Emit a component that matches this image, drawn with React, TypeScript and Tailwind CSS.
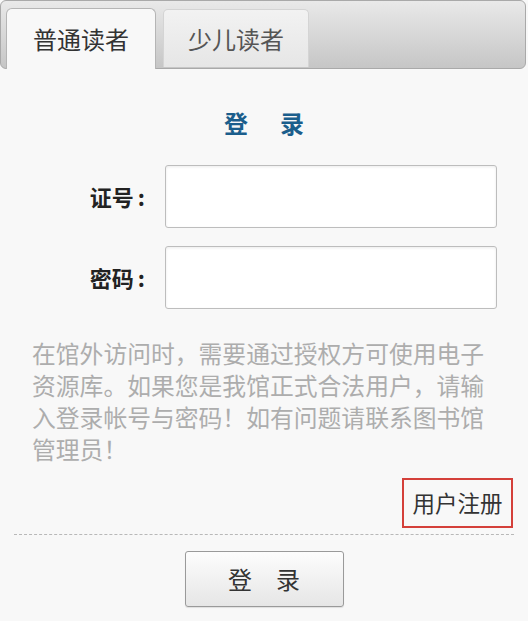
import React from "react";

const CJK = { fontFamily: '"Noto Sans CJK SC", "Noto Sans", sans-serif' };

function Field({ label }: { label: string }) {
  return (
    <div className="flex items-center">
      <div className="flex w-[145px] items-center justify-end text-[22px] font-bold text-[#222]">
        <span>{label}</span>
        <span className="ml-[4px]">:</span>
      </div>
      <input
        type="text"
        className="ml-[20px] h-[63px] w-[332px] rounded-[3px] border-[1.5px] border-[#bdbdbd] bg-white shadow-[inset_0_1px_3px_rgba(0,0,0,0.08)] outline-none"
      />
    </div>
  );
}

export default function App() {
  return (
    <div className="h-[621px] w-[528px] overflow-hidden bg-[#f8f8f8]" style={CJK}>
      {/* tab strip */}
      <div className="flex h-[69px] w-[526px] items-end gap-[7px] rounded-[6px] border border-[#a9a9a9] bg-gradient-to-b from-[#e9e9e9] to-[#c6c6c6] pl-[5px]">
        <div className="-mb-px flex h-[61px] w-[150px] items-center justify-center rounded-t-[6px] border border-b-0 border-[#b5b5b5] bg-[#f8f8f8] text-[24px] text-[#333]">
          普通读者
        </div>
        <div className="mb-px flex h-[58px] w-[146px] items-center justify-center rounded-t-[5px] border border-b-0 border-[#d4d4d4] bg-gradient-to-b from-[#f2f2f2] to-[#e6e6e6] text-[24px] text-[#555]">
          少儿读者
        </div>
      </div>

      <div className="mt-[42px] flex justify-center gap-[32px] text-[24px] font-bold leading-[24px] text-[#1b5e8c]">
        <span>登</span>
        <span>录</span>
      </div>

      <div className="mt-[30px] flex flex-col gap-[18px]">
        <Field label="证号" />
        <Field label="密码" />
      </div>

      <p className="ml-[32px] mt-[28px] w-[468px] text-[23.8px] leading-[32px] text-[#adadad]">
        在馆外访问时，需要通过授权方可使用电子资源库。如果您是我馆正式合法用户，请输入登录帐号与密码！如有问题请联系图书馆管理员！
      </p>

      <div className="mr-[15px] mt-[13px] flex justify-end">
        <a className="flex h-[50px] w-[111px] items-center justify-center border-2 border-[#d4403a] text-[22.5px] text-[#333]">
          用户注册
        </a>
      </div>

      <div className="mx-[14px] mt-[6px] border-t border-dashed border-[#b8b8b8]" />

      <div className="mt-[16px] flex justify-center">
        <button className="flex h-[56px] w-[159px] items-center justify-center gap-[24px] rounded-[3px] border border-[#9a9a9a] bg-gradient-to-b from-[#fdfdfd] to-[#e6e6e6] text-[24px] text-[#333] shadow-[0_1px_1px_rgba(0,0,0,0.1)]">
          <span>登</span>
          <span>录</span>
        </button>
      </div>
    </div>
  );
}
